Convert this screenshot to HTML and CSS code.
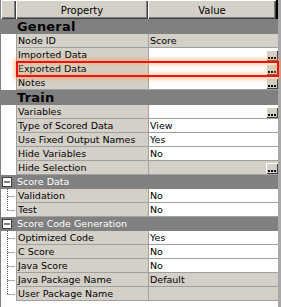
FILE: index.html
```html
<!DOCTYPE html>
<html lang="en">
<head>
    <meta charset="UTF-8">
    <title>Properties</title>
    <link rel="stylesheet" href="styles.css">
</head>
<body>
    <div class="painel">
        <div class="cabecalho">
            <div class="cab-gutter"></div>
            <div class="cab-cell">Property</div>
            <div class="cab-cell">Value</div>
        </div>

        <div class="grupo">General</div>
        <div class="linha"><div class="gut"></div><div class="prop">Node ID</div><div class="val ro">Score</div></div>
        <div class="linha"><div class="gut"></div><div class="prop">Imported Data</div><div class="val"><span></span><i class="btn"></i></div></div>
        <div class="linha marcada"><div class="gut"></div><div class="prop">Exported Data</div><div class="val"><span></span><i class="btn"></i></div></div>
        <div class="linha"><div class="gut"></div><div class="prop">Notes</div><div class="val"><span></span><i class="btn"></i></div></div>

        <div class="grupo">Train</div>
        <div class="linha"><div class="gut"></div><div class="prop">Variables</div><div class="val"><span></span><i class="btn"></i></div></div>
        <div class="linha"><div class="gut"></div><div class="prop">Type of Scored Data</div><div class="val">View</div></div>
        <div class="linha"><div class="gut"></div><div class="prop">Use Fixed Output Names</div><div class="val">Yes</div></div>
        <div class="linha"><div class="gut"></div><div class="prop">Hide Variables</div><div class="val">No</div></div>
        <div class="linha"><div class="gut"></div><div class="prop">Hide Selection</div><div class="val ro"><span></span><i class="btn"></i></div></div>

        <div class="subgrupo">
            <div class="gut"><svg width="15" height="14"><rect x="1.5" y="2.5" width="9" height="9" fill="#fff" stroke="#404040"/><line x1="3" y1="7" x2="9" y2="7" stroke="#000"/></svg></div>
            <div class="sub-titulo">Score Data</div>
        </div>
        <div class="linha"><div class="gut"><svg width="15" height="14"><path d="M6.5 0V14M6.5 7.5H14" stroke="#555" stroke-dasharray="1 1"/></svg></div><div class="prop">Validation</div><div class="val">No</div></div>
        <div class="linha"><div class="gut"><svg width="15" height="14"><path d="M6.5 0V7.5M6.5 7.5H14" stroke="#555" stroke-dasharray="1 1"/></svg></div><div class="prop">Test</div><div class="val">No</div></div>

        <div class="subgrupo">
            <div class="gut"><svg width="15" height="14"><rect x="1.5" y="2.5" width="9" height="9" fill="#fff" stroke="#404040"/><line x1="3" y1="7" x2="9" y2="7" stroke="#000"/></svg></div>
            <div class="sub-titulo">Score Code Generation</div>
        </div>
        <div class="linha"><div class="gut"><svg width="15" height="14"><path d="M6.5 0V14M6.5 7.5H14" stroke="#555" stroke-dasharray="1 1"/></svg></div><div class="prop">Optimized Code</div><div class="val">Yes</div></div>
        <div class="linha"><div class="gut"><svg width="15" height="14"><path d="M6.5 0V14M6.5 7.5H14" stroke="#555" stroke-dasharray="1 1"/></svg></div><div class="prop">C Score</div><div class="val">No</div></div>
        <div class="linha"><div class="gut"><svg width="15" height="14"><path d="M6.5 0V14M6.5 7.5H14" stroke="#555" stroke-dasharray="1 1"/></svg></div><div class="prop">Java Score</div><div class="val">No</div></div>
        <div class="linha"><div class="gut"><svg width="15" height="14"><path d="M6.5 0V14M6.5 7.5H14" stroke="#555" stroke-dasharray="1 1"/></svg></div><div class="prop">Java Package Name</div><div class="val ro">Default</div></div>
        <div class="linha"><div class="gut"><svg width="15" height="14"><path d="M6.5 0V7.5M6.5 7.5H14" stroke="#555" stroke-dasharray="1 1"/></svg></div><div class="prop">User Package Name</div><div class="val ro"></div></div>
    </div>
</body>
</html>
```

FILE: styles.css
```css
body{
    margin: 0;
    background-color: #a8a8a8;
    font-family: "DejaVu Sans", sans-serif;
    font-size: 9.5px;
    color: #000;
}
.painel{
    width: 277px;
    height: 307px;
    background-color: #fff;
    border-left: 1px solid #808080;
}
.cabecalho{
    display: grid;
    grid-template-columns: 15px 132px 130px;
    height: 19px;
    background-color: #d4d0c8;
}
.cab-gutter, .cab-cell{
    box-shadow: inset 1px 1px #fff, inset -1px -1px #404040, inset -2px -2px #808080;
}
.cab-cell{
    display: flex;
    justify-content: center;
    align-items: center;
    padding-top: 1px;
    font-size: 10px;
}
.cabecalho .cab-cell:last-child{
    border-right: 2px solid #000;
}
.grupo{
    height: 15px;
    background-color: #808080;
    padding-left: 16px;
    font-size: 13px;
    font-weight: bold;
    line-height: 16px;
    letter-spacing: 0.2px;
}
.linha{
    display: grid;
    grid-template-columns: 15px 132px 130px;
    height: 14px;
}
.linha.marcada{
    position: relative;
    z-index: 1;
}
.linha.marcada::after{
    content: '';
    position: absolute;
    left: 15px;
    right: -1px;
    top: -1px;
    bottom: -1px;
    border: 2px solid #e8141a;
    box-shadow: 0 0 4px 2px rgba(255, 150, 70, 0.55), inset 0 0 4px 2px rgba(255, 170, 90, 0.5);
}
.gut{
    background-color: #fff;
    height: 14px;
}
.gut svg{
    display: block;
}
.prop, .val{
    border-left: 1px solid #a0a0a0;
    border-bottom: 1px solid #a0a0a0;
    padding-left: 1px;
    line-height: 13px;
    white-space: nowrap;
    overflow: hidden;
}
.prop{
    background-color: #d4d0c8;
}
.val{
    background-color: #fff;
    display: flex;
    justify-content: space-between;
    align-items: flex-end;
}
.val.ro{
    background-color: #d4d0c8;
}
.btn{
    display: block;
    width: 12px;
    height: 11px;
    margin-bottom: 0;
    background-color: #d4d0c8;
    box-shadow: inset 1px 1px #fff, inset -1px -1px #404040;
    position: relative;
}
.btn::after{
    content: '';
    position: absolute;
    left: 2px;
    bottom: 2px;
    width: 2px;
    height: 2px;
    background-color: #000;
    box-shadow: 3px 0 #000, 6px 0 #000;
}
.subgrupo{
    display: grid;
    grid-template-columns: 15px 1fr;
    height: 14px;
    background-color: #808080;
}
.subgrupo .gut{
    background-color: #808080;
}
.sub-titulo{
    color: #fff;
    padding-left: 1px;
    line-height: 14px;
}
```
